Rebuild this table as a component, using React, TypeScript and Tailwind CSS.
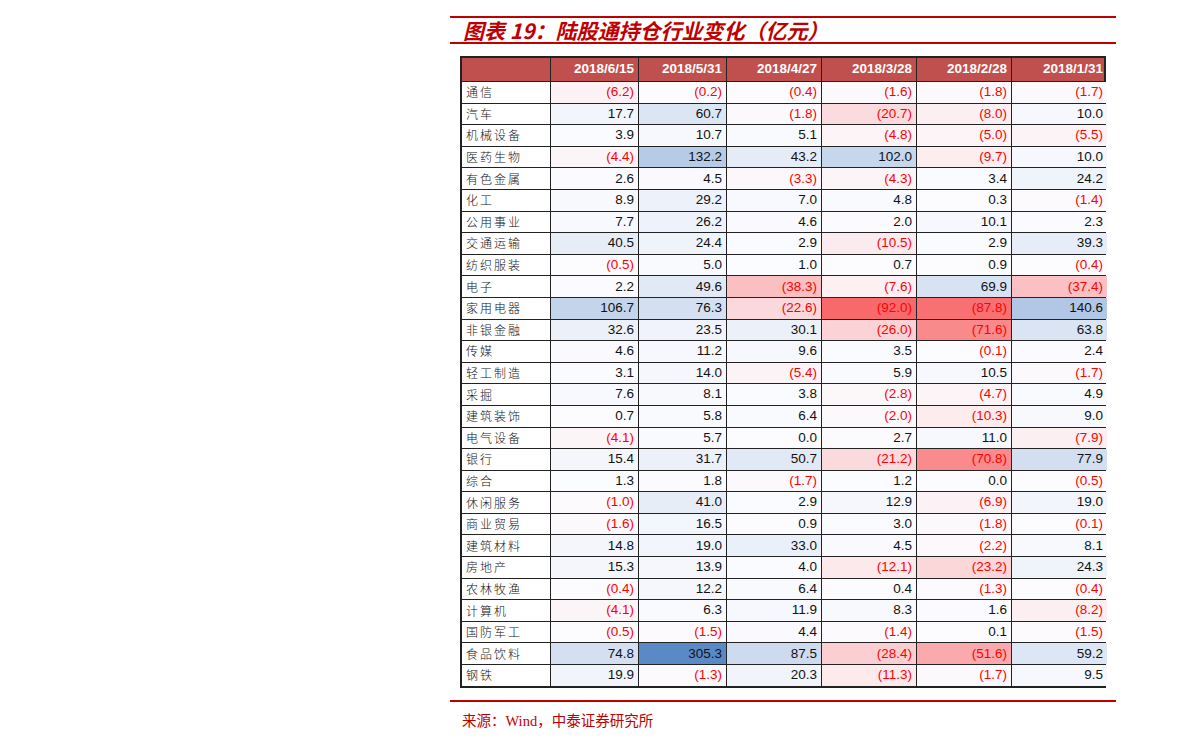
import React from "react";

const headers = ["2018/6/15", "2018/5/31", "2018/4/27", "2018/3/28", "2018/2/28", "2018/1/31"];

const rows: [string, number[]][] = [
  ["通信", [-6.2, -0.2, -0.4, -1.6, -1.8, -1.7]],
  ["汽车", [17.7, 60.7, -1.8, -20.7, -8.0, 10.0]],
  ["机械设备", [3.9, 10.7, 5.1, -4.8, -5.0, -5.5]],
  ["医药生物", [-4.4, 132.2, 43.2, 102.0, -9.7, 10.0]],
  ["有色金属", [2.6, 4.5, -3.3, -4.3, 3.4, 24.2]],
  ["化工", [8.9, 29.2, 7.0, 4.8, 0.3, -1.4]],
  ["公用事业", [7.7, 26.2, 4.6, 2.0, 10.1, 2.3]],
  ["交通运输", [40.5, 24.4, 2.9, -10.5, 2.9, 39.3]],
  ["纺织服装", [-0.5, 5.0, 1.0, 0.7, 0.9, -0.4]],
  ["电子", [2.2, 49.6, -38.3, -7.6, 69.9, -37.4]],
  ["家用电器", [106.7, 76.3, -22.6, -92.0, -87.8, 140.6]],
  ["非银金融", [32.6, 23.5, 30.1, -26.0, -71.6, 63.8]],
  ["传媒", [4.6, 11.2, 9.6, 3.5, -0.1, 2.4]],
  ["轻工制造", [3.1, 14.0, -5.4, 5.9, 10.5, -1.7]],
  ["采掘", [7.6, 8.1, 3.8, -2.8, -4.7, 4.9]],
  ["建筑装饰", [0.7, 5.8, 6.4, -2.0, -10.3, 9.0]],
  ["电气设备", [-4.1, 5.7, 0.0, 2.7, 11.0, -7.9]],
  ["银行", [15.4, 31.7, 50.7, -21.2, -70.8, 77.9]],
  ["综合", [1.3, 1.8, -1.7, 1.2, 0.0, -0.5]],
  ["休闲服务", [-1.0, 41.0, 2.9, 12.9, -6.9, 19.0]],
  ["商业贸易", [-1.6, 16.5, 0.9, 3.0, -1.8, -0.1]],
  ["建筑材料", [14.8, 19.0, 33.0, 4.5, -2.2, 8.1]],
  ["房地产", [15.3, 13.9, 4.0, -12.1, -23.2, 24.3]],
  ["农林牧渔", [-0.4, 12.2, 6.4, 0.4, -1.3, -0.4]],
  ["计算机", [-4.1, 6.3, 11.9, 8.3, 1.6, -8.2]],
  ["国防军工", [-0.5, -1.5, 4.4, -1.4, 0.1, -1.5]],
  ["食品饮料", [74.8, 305.3, 87.5, -28.4, -51.6, 59.2]],
  ["钢铁", [19.9, -1.3, 20.3, -11.3, -1.7, 9.5]],
];

const MIN = -92.0;
const MAX = 305.3;
const W = [252, 252, 255];
const R = [248, 105, 107];
const B = [90, 138, 198];

function cellColor(v: number): string {
  let t: number;
  let target: number[];
  if (v < 0) {
    t = v / MIN;
    target = R;
  } else {
    t = v / MAX;
    target = B;
  }
  const c = W.map((w, i) => Math.round(w + (target[i] - w) * t));
  return `rgb(${c[0]},${c[1]},${c[2]})`;
}

function fmt(v: number): string {
  if (v < 0) return `(${Math.abs(v).toFixed(1)})`;
  return v.toFixed(1);
}

const colW = ["w-[89px]", "w-[88px]", "w-[88px]", "w-[95px]", "w-[95px]", "w-[95px]", "w-[95px]"];

export default function App() {
  return (
    <div className="w-[1191px] h-[751px] bg-white overflow-hidden">
      <div className="ml-[450px] w-[666px] pt-[16px]">
        <div className="border-t-2 border-[#C00000]" />
        <div
          className="h-[24px] pl-[13px] flex items-center text-[21px] font-bold italic text-[#C00000] leading-none"
          style={{ fontFamily: '"Noto Sans CJK SC", "Liberation Sans", sans-serif' }}
        >
          图表 19：陆股通持仓行业变化（亿元）
        </div>
        <div className="border-t-2 border-[#C00000]" />
        <div className="mt-[12px] ml-[10px] w-[646px] border-2 border-[#222]">
          <div className="flex h-[23px] bg-[#C0504D] text-white font-bold text-[13.5px]" style={{ fontFamily: '"Liberation Sans", Arial, sans-serif' }}>
            <div className={`${colW[0]} shrink-0 border-r border-[#222]`} />
            {headers.map((h, i) => (
              <div
                key={h}
                className={`${colW[i + 1]} shrink-0 flex items-center justify-end pr-[4px] ${i < 5 ? "border-r border-[#222]" : ""}`}
              >
                {h}
              </div>
            ))}
          </div>
          {rows.map(([name, vals]) => (
            <div key={name} className="flex h-[21.6px] border-t border-[#222]">
              <div
                className={`${colW[0]} shrink-0 border-r border-[#222] bg-white flex items-center pl-[4px] text-[12px] tracking-[2px] text-[#111]`}
                style={{ fontFamily: '"Noto Sans CJK SC", sans-serif', fontWeight: 300 }}
              >
                {name}
              </div>
              {vals.map((v, i) => (
                <div
                  key={i}
                  className={`${colW[i + 1]} shrink-0 flex items-center justify-end pr-[4px] text-[13.5px] ${i < 5 ? "border-r border-[#222]" : ""} ${v < 0 ? "text-[#FF0000]" : "text-[#111]"}`}
                  style={{ backgroundColor: cellColor(v), fontFamily: '"Liberation Sans", Arial, sans-serif' }}
                >
                  {fmt(v)}
                </div>
              ))}
            </div>
          ))}
        </div>
        <div className="mt-[12px] border-t-2 border-[#C00000]" />
        <div
          className="mt-[12px] pl-[12px] text-[14.5px] text-[#C00000] leading-none"
          style={{ fontFamily: '"Liberation Serif", "Noto Sans CJK SC", serif' }}
        >
          来源：Wind，中泰证券研究所
        </div>
      </div>
    </div>
  );
}
